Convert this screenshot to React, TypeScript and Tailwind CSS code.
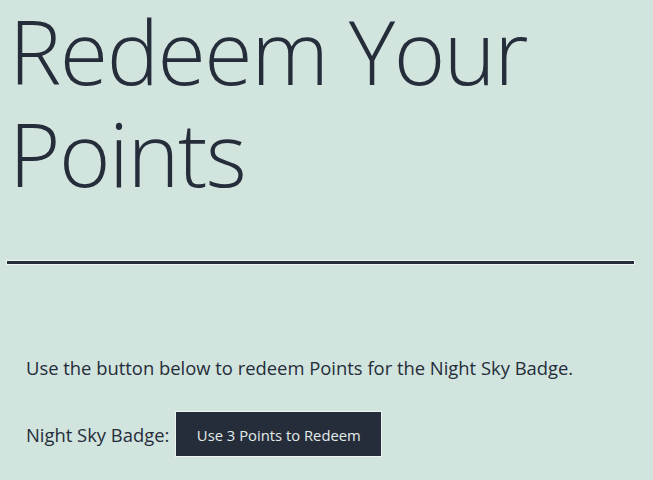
import React from "react";

export default function App() {
  return (
    <div className="min-h-[480px] w-full bg-[#d1e4de] text-[#252d3a] overflow-hidden" style={{ fontFamily: '"Open Sans", "Noto Sans", sans-serif' }}>
      <div className="px-[7px]">
        <h1 className="m-0 pt-0 pl-[2px] text-[88px] leading-[102px] font-light tracking-[-1.5px]">
          Redeem Your Points
        </h1>
        <div className="mt-[57px] h-[3px] w-[627px] bg-[#252d3a] shadow-[0_0_0_1px_#eef5f1]" />
        <div className="pl-[19px] pt-[91px]">
          <p className="m-0 text-[18.4px] leading-[25px]">
            Use the button below to redeem Points for the Night Sky Badge.
          </p>
          <div className="mt-[31px] flex items-center gap-[6px]">
            <span className="text-[18.4px] leading-[25px]">Night Sky Badge:</span>
            <button className="h-[46px] w-[207px] bg-[#262d3a] text-[#e2ecea] text-[14.8px] leading-[20px] pt-[2px] border border-[#eef5f1]">
              Use 3 Points to Redeem
            </button>
          </div>
        </div>
      </div>
    </div>
  );
}
